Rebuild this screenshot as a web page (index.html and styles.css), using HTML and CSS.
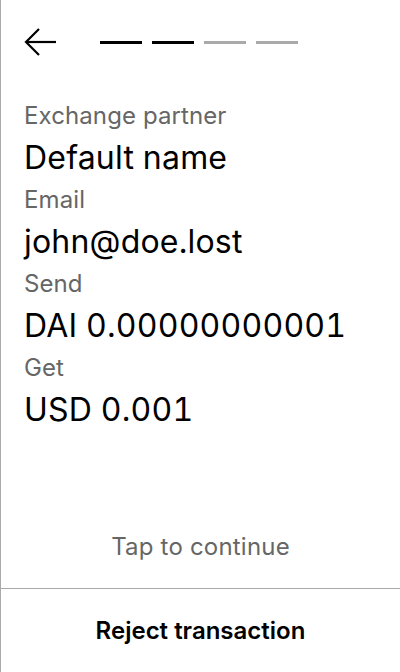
FILE: index.html
```html
<!DOCTYPE html>
<html>
<head>
<meta charset="utf-8">
<link rel="stylesheet" href="styles.css">
</head>
<body>
<div class="screen">
  <div class="header">
    <svg class="back" width="32" height="28" viewBox="0 0 32 28" fill="none" stroke="#000" stroke-width="2.2">
      <path d="M2 14 H32"/>
      <path d="M15 1 L2 14 L15 27"/>
    </svg>
    <div class="steps">
      <span class="step done"></span>
      <span class="step done"></span>
      <span class="step"></span>
      <span class="step"></span>
    </div>
  </div>
  <div class="details">
    <div class="label">Exchange partner</div>
    <div class="value">Default name</div>
    <div class="label">Email</div>
    <div class="value">john@doe.lost</div>
    <div class="label">Send</div>
    <div class="value">DAI 0.00000000001</div>
    <div class="label">Get</div>
    <div class="value">USD 0.001</div>
  </div>
  <div class="tap">Tap to continue</div>
  <div class="reject">Reject transaction</div>
</div>
</body>
</html>
```
FILE: styles.css
```css
html, body {
  margin: 0;
  padding: 0;
  background: #fff;
}
.screen {
  box-sizing: border-box;
  width: 400px;
  height: 672px;
  border-left: 1px solid #aaa;
  display: flex;
  flex-direction: column;
  font-family: Inter, "Noto Sans", sans-serif;
  color: #000;
}
.header {
  display: flex;
  align-items: center;
  padding: 28px 0 0 23px;
  height: 28px;
}
.back {
  display: block;
}
.steps {
  display: flex;
  gap: 10px;
  margin-left: 44px;
}
.step {
  width: 42px;
  height: 3px;
  background: #aaa;
}
.step.done {
  background: #000;
}
.details {
  padding: 46px 0 0 23px;
}
.label {
  font-size: 24px;
  line-height: 28px;
  color: #666;
  letter-spacing: 0.1px;
}
.value {
  font-size: 32px;
  line-height: 38px;
  margin: 9px 0;
  letter-spacing: 0.2px;
  font-variant-numeric: tabular-nums;
}
.tap {
  margin-top: auto;
  text-align: center;
  font-size: 24px;
  color: #666;
  line-height: 29px;
  padding-bottom: 27px;
  letter-spacing: 0.2px;
}
.reject {
  border-top: 1px solid #aaa;
  height: 83px;
  display: flex;
  align-items: center;
  justify-content: center;
  font-size: 24px;
  font-weight: 600;
}
```
